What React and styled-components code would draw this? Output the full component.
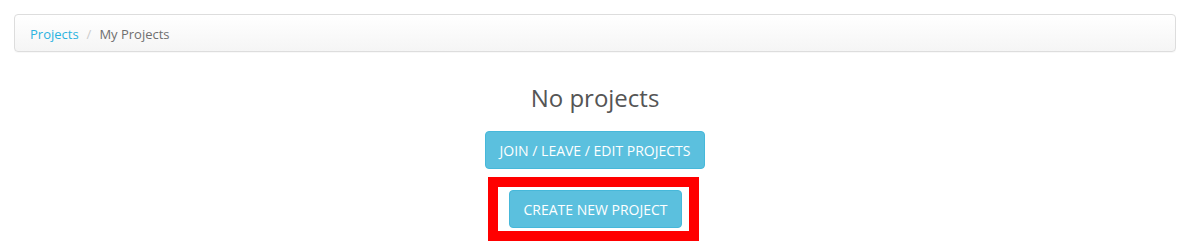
import React from "react";
import styled, { createGlobalStyle } from "styled-components";

const Global = createGlobalStyle`
  html, body { margin: 0; padding: 0; background: #fff; }
  body { font-family: "Open Sans", "Liberation Sans", sans-serif; color: #555; }
`;

const Page = styled.div`
  padding: 14px 24px 0 14px;
  display: flex;
  flex-direction: column;
`;

const Breadcrumb = styled.nav`
  padding: 9px 15px 7px;
  height: 20px;
  display: flex;
  align-items: center;
  border: 1px solid #dddddd;
  border-radius: 4px;
  background: linear-gradient(to bottom, #ffffff 0%, #f5f5f5 100%);
  box-shadow: 0 1px 1px rgba(0, 0, 0, 0.03);
  font-size: 13px;
  line-height: 20px;
`;

const CrumbLink = styled.a`
  color: #2bb3e0;
  text-decoration: none;
`;

const Separator = styled.span`
  padding: 0 8px;
  color: #cccccc;
`;

const Current = styled.span`
  color: #6f6f6f;
`;

const Content = styled.div`
  display: flex;
  flex-direction: column;
  align-items: center;
`;

const Heading = styled.h2`
  margin: 33px 0 0;
  font-size: 24px;
  line-height: 26px;
  font-weight: 400;
  color: #555555;
`;

const Button = styled.button`
  box-sizing: border-box;
  height: 38px;
  padding: 2px ${(p) => p.$px || 14}px 0;
  margin-top: ${(p) => p.$mt || 0}px;
  border: 1px solid #46b8da;
  border-radius: 4px;
  background: #5bc0de;
  color: #ffffff;
  font-family: "Open Sans", "Liberation Sans", sans-serif;
  font-size: 14px;
  line-height: 20px;
  text-transform: uppercase;
  cursor: pointer;
`;

const Highlight = styled.div`
  margin-top: 8px;
  margin-right: 3px;
  border: 10px solid #ff0000;
  padding: 3px 7px 3px 11px;
  display: flex;
`;

export default function App() {
  return (
    <>
      <Global />
      <Page>
        <Breadcrumb>
          <CrumbLink href="#">Projects</CrumbLink>
          <Separator>/</Separator>
          <Current>My Projects</Current>
        </Breadcrumb>
        <Content>
          <Heading>No projects</Heading>
          <Button $mt={20}>Join / Leave / Edit Projects</Button>
          <Highlight>
            <Button $px={13}>Create New Project</Button>
          </Highlight>
        </Content>
      </Page>
    </>
  );
}
